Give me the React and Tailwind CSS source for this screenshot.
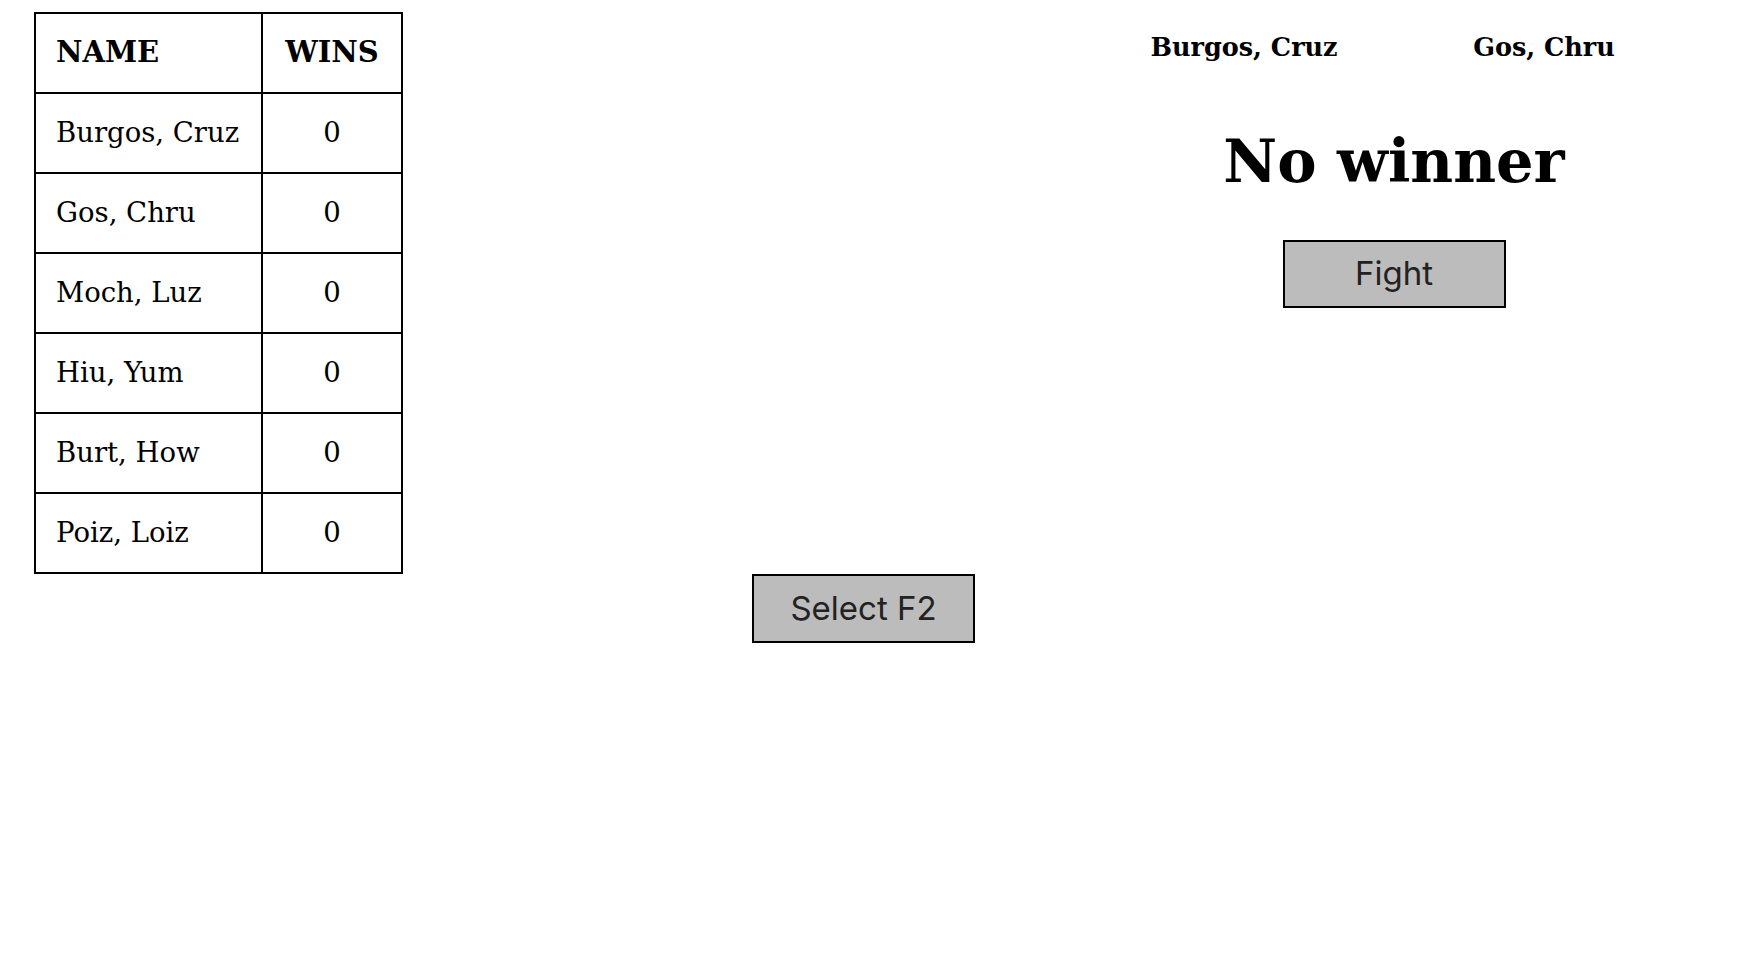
const fighters = [
    { name: 'Burgos, Cruz', wins: 0 },
    { name: 'Gos, Chru', wins: 0 },
    { name: 'Moch, Luz', wins: 0 },
    { name: 'Hiu, Yum', wins: 0 },
    { name: 'Burt, How', wins: 0 },
    { name: 'Poiz, Loiz', wins: 0 },
];

function App() {
    return (
        <div className="min-h-screen bg-white text-black font-['DejaVu_Serif',serif]">
            <div className="flex items-start pt-3 pl-[34px]">

                {/* Standings Table */}
                <table className="border-collapse border-2 border-black">
                    <thead>
                        <tr className="h-20">
                            <th className="border-2 border-black text-left font-bold text-[29px] pl-5 pr-3 w-[227px] whitespace-nowrap">NAME</th>
                            <th className="border-2 border-black text-center font-bold text-[29px] w-[140px]">WINS</th>
                        </tr>
                    </thead>
                    <tbody>
                        {fighters.map((f) => (
                            <tr key={f.name} className="h-20">
                                <td className="border-2 border-black text-[27.5px] pl-5 pr-3 whitespace-nowrap">{f.name}</td>
                                <td className="border-2 border-black text-[27.5px] text-center">{f.wins}</td>
                            </tr>
                        ))}
                    </tbody>
                </table>

                <div className="flex-1" />

                {/* Fight Panel */}
                <div className="w-[600px] mr-[54px] flex flex-col items-center">
                    <div className="grid grid-cols-2 w-full pt-[23px]">
                        <div className="text-center font-bold text-[25.5px] leading-none whitespace-nowrap">Burgos, Cruz</div>
                        <div className="text-center font-bold text-[25.5px] leading-none whitespace-nowrap">Gos, Chru</div>
                    </div>
                    <h1 className="mt-[71px] text-[59px] font-bold leading-none whitespace-nowrap">No winner</h1>
                    <button className="mt-[49px] w-[223px] h-[68px] bg-[#bcbcbc] border-2 border-black text-[#222] text-[33px] font-['Inter',sans-serif]">
                        Fight
                    </button>
                </div>
            </div>

            {/* Select Fighter */}
            <div className="flex pl-[752px]">
                <button className="w-[223px] h-[69px] bg-[#bcbcbc] border-2 border-black text-[#222] text-[33px] font-['Inter',sans-serif]">
                    Select F2
                </button>
            </div>
        </div>
    );
}

export default App;
